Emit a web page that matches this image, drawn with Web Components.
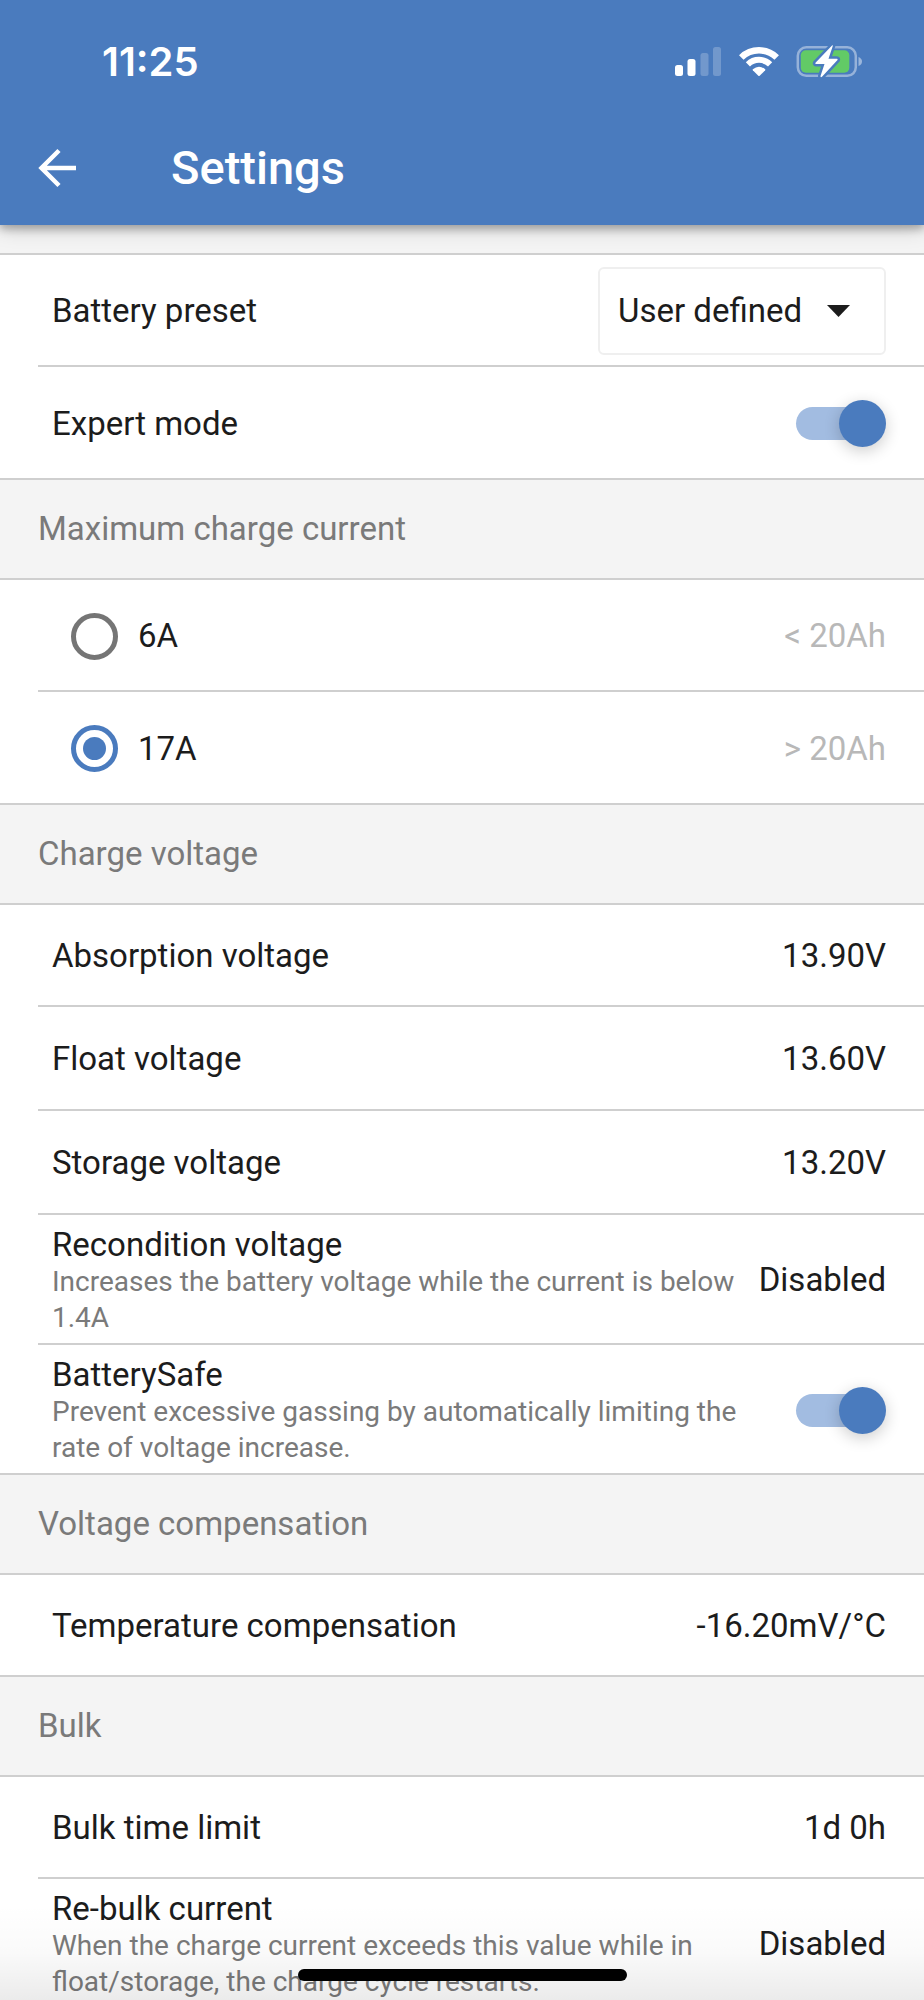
<!DOCTYPE html>
<html lang="en">
<head>
<meta charset="utf-8">
<meta name="viewport" content="width=device-width, initial-scale=1">
<title>Settings</title>
<style>
  :root {
    --blue: #4a7bbe;
    --track: #a2bce1;
    --line: #cfcfcf;
    --band: #f4f4f4;
    --ink: #1c1c1c;
    --muted: #7a7a7a;
    --faint: #b8b8b8;
    --text: 33px;
    --small: 28px;
    --gutter: 38px;
    --inset: 14px;
  }
  body {
    margin: 0;
    background: #fff;
    color: var(--ink);
    font-family: Roboto, "Liberation Sans", sans-serif;
    font-size: var(--text);
    line-height: 38px;
  }
</style>
</head>
<body>
<settings-app>
  <status-bar slot="top" time="11:25"></status-bar>
  <app-bar slot="top" heading="Settings"></app-bar>

  <settings-section>
    <select-row label="Battery preset" value="User defined"></select-row>
    <switch-row label="Expert mode"></switch-row>
  </settings-section>
  <settings-section heading="Maximum charge current">
    <radio-rows name="current" selected="17A" options="6A|&lt; 20Ah;17A|&gt; 20Ah"></radio-rows>
  </settings-section>
  <settings-section heading="Charge voltage">
    <value-row label="Absorption voltage" value="13.90V"></value-row>
    <value-row label="Float voltage" value="13.60V"></value-row>
    <value-row label="Storage voltage" value="13.20V"></value-row>
    <value-row label="Recondition voltage" value="Disabled" note="Increases the battery voltage while the current is below 1.4A"></value-row>
    <switch-row label="BatterySafe" note="Prevent excessive gassing by automatically limiting the rate of voltage increase."></switch-row>
  </settings-section>
  <settings-section heading="Voltage compensation">
    <value-row label="Temperature compensation" value="-16.20mV/°C"></value-row>
  </settings-section>
  <settings-section heading="Bulk">
    <value-row label="Bulk time limit" value="1d 0h"></value-row>
    <value-row label="Re-bulk current" value="Disabled" note="When the charge current exceeds this value while in float/storage, the charge cycle restarts."></value-row>
  </settings-section>
</settings-app>

<script>
const define = (name, render) => customElements.define(name, class extends HTMLElement {
  connectedCallback() {
    if (this.shadowRoot) return;
    this.attachShadow({ mode: 'open' }).innerHTML = render(this);
  }
});
const esc = s => (s || '').replace(/&/g, '&amp;').replace(/</g, '&lt;').replace(/>/g, '&gt;');
const attr = (el, name) => esc(el.getAttribute(name));

/* Styles shared by every kind of row. */
const rowStyle = `
  :host { display: block; }
  .row {
    box-sizing: border-box;
    display: flex; align-items: center; gap: var(--inset);
    min-height: 104px;
    margin-left: var(--gutter);
    padding: 2px var(--gutter) 0 var(--inset);
    border-bottom: 2px solid var(--line);
  }
  :host(:first-child) .row { min-height: 102px; }
  :host([note]) .row { min-height: 130px; }
  :host(:last-child) .row:last-child {
    margin-left: 0;
    padding-left: calc(var(--gutter) + var(--inset));
  }
  .text { flex: 1; min-width: 0; }
  .label { display: block; }
  .note { margin: 0; font-size: var(--small); line-height: 36px; color: var(--muted); }
  :host([note]) .text { padding-top: 2px; }
  .value { flex: none; }
`;
/* Rows that hold a control are taller. */
const controlStyle = `
  :host(:not([note])) .row { min-height: 113px; }
  :host(:first-child) .row:first-of-type { min-height: 112px; }
`;
const noteOf = el => el.hasAttribute('note') ? `<p class="note">${attr(el, 'note')}</p>` : '';

define('settings-app', () => `
  <style>
    :host { display: flex; flex-direction: column; height: 100vh; position: relative; overflow: hidden; }
    header { flex: none; position: relative; z-index: 1; background: var(--blue); color: #fff;
      box-shadow: 0 4px 8px rgba(0,0,0,.25), 0 2px 20px rgba(0,0,0,.22); }
    main { flex: 1; min-height: 0; overflow-y: auto; scrollbar-width: none; }
    .fade { position: absolute; inset: auto 0 0; height: 96px; pointer-events: none;
      background: linear-gradient(rgba(0,0,0,0), rgba(0,0,0,.02) 50%, rgba(0,0,0,.08)); }
    .home { position: absolute; bottom: 19px; left: 50%; margin-left: -164px;
      width: 329px; height: 12px; border-radius: 6px; background: #000; }
  </style>
  <header><slot name="top"></slot></header>
  <main><slot></slot></main>
  <div class="fade"></div>
  <div class="home"></div>`);

define('status-bar', el => `
  <style>
    :host { display: flex; justify-content: space-between; align-items: center;
      height: 124px; padding: 0 62px 0 102px; }
    time { font: 600 40px/48px Inter, Roboto, sans-serif; }
    svg { display: block; }
    .icons { display: flex; align-items: center; gap: 17px; }
  </style>
  <time>${attr(el, 'time')}</time>
  <div class="icons">
    <svg width="47" height="32" viewBox="0 0 47 32" fill="#fff" aria-hidden="true">
      <rect x="0" y="19" width="8" height="11" rx="2.5"/>
      <rect x="12.5" y="13" width="8" height="17" rx="2.5"/>
      <g opacity=".22"><rect x="25.5" y="7" width="8" height="23" rx="2.5"/>
      <rect x="38" y="1" width="8" height="29" rx="2.5"/></g>
    </svg>
    <svg width="40" height="32" viewBox="0 0 40 32" fill="none" stroke="#fff" aria-hidden="true">
      <path stroke-width="6.5" d="M2.3 11.5A25.5 25.5 0 0 1 37.7 11.5"/>
      <path stroke-width="6" d="M8.9 18.3A16 16 0 0 1 31.1 18.3"/>
      <path fill="#fff" stroke="none" d="M13.8 23.3Q20 18.2 26.2 23.3Q26.5 23.7 26.2 24.2L20.7 29.7Q20 30.2 19.3 29.7L13.8 24.2Q13.5 23.7 13.8 23.3Z"/>
    </svg>
    <svg width="66" height="34" viewBox="0 0 66 34" aria-hidden="true">
      <rect x="1.8" y="2.3" width="58" height="28.5" rx="8.5" fill="none" stroke="#fff" stroke-opacity=".42" stroke-width="2.5"/>
      <path d="M62.5 12Q66 13.5 66 16.5T62.5 21Z" fill="#fff" fill-opacity=".45"/>
      <rect x="4.8" y="5.3" width="48.5" height="22.5" rx="5" fill="#62ca66"/>
      <path d="M36.500 0L19.5 17.7Q18.8 19 20 19H28.5L24.5 31Q24.5 33 26 31.8L41.5 15Q42 13.7 40.8 13.7H32.5L36.8 1Z" fill="#fff" stroke="#4a7bbe" stroke-width="5" paint-order="stroke" stroke-linejoin="round"/>
    </svg>
  </div>`);

define('app-bar', el => `
  <style>
    :host { display: flex; align-items: center; box-sizing: border-box;
      height: 101px; padding: 0 32px 14px; gap: 90px; }
    button { width: 49px; height: 49px; padding: 0; border: 0; background: none; color: inherit; }
    svg { display: block; }
    h1 { margin: 0; font-size: 47px; line-height: 56px; font-weight: 500; }
  </style>
  <button type="button" aria-label="Back">
    <svg width="49" height="49" viewBox="0 0 49 49" fill="none" stroke="#fff" stroke-width="4.5" aria-hidden="true">
      <path d="M44 25H10M27 7.5L9.5 25L27 42.5"/>
    </svg>
  </button>
  <h1>${attr(el, 'heading')}</h1>`);

define('settings-section', el => `
  <style>
    :host { display: block; }
    h2, .spacer { box-sizing: border-box; margin: 0; background: var(--band); border-bottom: 2px solid var(--line); }
    h2 { padding: 30px var(--gutter); font-size: var(--text); line-height: 38px; font-weight: 400; color: var(--muted); }
    .spacer { height: 30px; }
  </style>
  ${el.hasAttribute('heading') ? `<h2>${attr(el, 'heading')}</h2>` : '<div class="spacer"></div>'}
  <slot></slot>`);

define('value-row', el => `
  <style>${rowStyle}</style>
  <div class="row">
    <div class="text"><span class="label">${attr(el, 'label')}</span>${noteOf(el)}</div>
    <span class="value">${attr(el, 'value')}</span>
  </div>`);

define('switch-row', el => `
  <style>${rowStyle}${controlStyle}
    input { appearance: none; flex: none; display: grid; align-items: center; margin: 0;
      width: 90px; height: 47px; }
    input::before, input::after { content: ""; grid-area: 1 / 1; }
    input::before { height: 33px; border-radius: 17px; background: #c4c4c4; margin-right: 6px; }
    input::after { width: 47px; height: 47px; border-radius: 50%; background: #fff;
      box-shadow: 0 4px 16px rgba(0,0,0,.2); }
    input:checked::before { background: var(--track); }
    input:checked::after { justify-self: end; background: var(--blue); }
  </style>
  <div class="row">
    <div class="text"><label class="label" for="sw">${attr(el, 'label')}</label>${noteOf(el)}</div>
    <input id="sw" type="checkbox" role="switch" checked>
  </div>`);

define('select-row', el => `
  <style>${rowStyle}${controlStyle}
    .box { display: grid; align-items: center; flex: none; }
    select, svg { grid-area: 1 / 1; }
    select { appearance: none; width: 288px; height: 88px; padding: 0 18px; margin: 0;
      border: 2px solid #efefef; border-radius: 6px; background: #fff; color: inherit; font: inherit; }
    svg { justify-self: end; margin-right: 36px; pointer-events: none; }
  </style>
  <div class="row">
    <div class="text"><label class="label" for="sel">${attr(el, 'label')}</label></div>
    <div class="box">
      <select id="sel"><option>${attr(el, 'value')}</option></select>
      <svg width="23" height="12" viewBox="0 0 23 12" aria-hidden="true"><path d="M0 0H23L11.5 12Z" fill="#1c1c1c"/></svg>
    </div>
  </div>`);

define('radio-rows', el => `
  <style>${rowStyle}${controlStyle}
    .row { gap: 20px; padding-left: 33px; }
    :host(:last-child) .row:last-child { padding-left: 71px; }
    input { appearance: none; flex: none; display: grid; place-items: center; box-sizing: border-box; margin: 0;
      width: 47px; height: 47px; border: 5px solid #757575; border-radius: 50%; }
    input:checked { border-color: var(--blue); }
    input:checked::before { content: ""; width: 23px; height: 23px; border-radius: 50%; background: var(--blue); }
    .label { flex: 1; }
    .value { color: var(--faint); }
  </style>
  ${el.getAttribute('options').split(';').map((option, i) => {
    const [label, hint] = option.split('|');
    const on = label === el.getAttribute('selected') ? 'checked' : '';
    return `<div class="row">
      <input type="radio" id="r${i}" name="${attr(el, 'name')}" ${on}>
      <label class="label" for="r${i}">${esc(label)}</label>
      <span class="value">${esc(hint)}</span>
    </div>`;
  }).join('')}`);
</script>
</body>
</html>
